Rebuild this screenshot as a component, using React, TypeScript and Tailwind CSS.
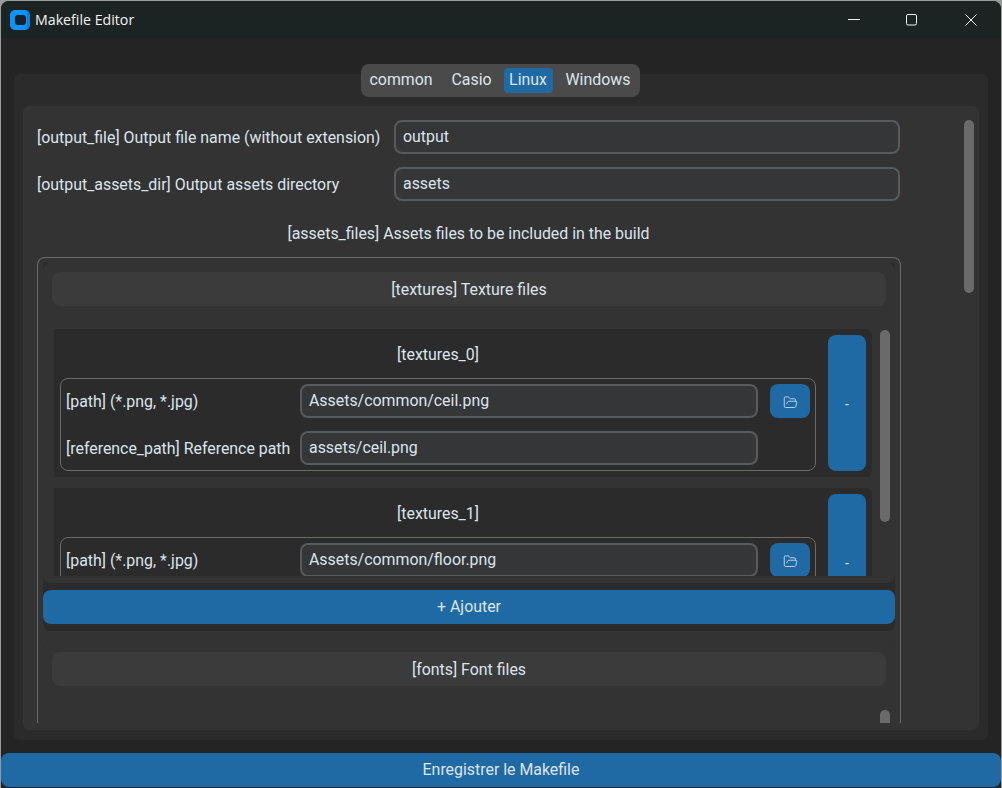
import { FolderOpen } from "lucide-react";

const inputCls =
  "h-[34px] rounded-[8px] border-2 border-[#565b5e] bg-[#343638] px-[7px] leading-[30px] text-[#dce4ee]";

const Field = ({ label, value, width }: { label: string; value: string; width: string }) => (
  <div className="flex items-center">
    <div className="w-[357px] shrink-0 whitespace-nowrap pt-[2px]">{label}</div>
    <div className={`${inputCls} ${width}`}>{value}</div>
  </div>
);

const TextureItem = ({ index, path, refPath }: { index: number; path: string; refPath?: string }) => (
  <div className="flex h-[148px] shrink-0 rounded-r-[6px] bg-[#2b2b2b] pl-[6px] pr-[6px] pt-[6px]">
    <div className="w-[756px] shrink-0">
      <div className="flex h-[37px] items-center justify-center pt-[2px]">[textures_{index}]</div>
      <div className="mt-[6px] h-[93px] rounded-[8px] border border-[#6a6a6a] pl-[5px] pt-[5px]">
        <div className="flex items-center">
          <div className="w-[234px] shrink-0 whitespace-nowrap pt-[2px]">[path] (*.png, *.jpg)</div>
          <div className={`${inputCls} w-[458px] shrink-0`}>{path}</div>
          <button className="ml-[12px] flex h-[34px] w-[40px] shrink-0 items-center justify-center rounded-[8px] bg-[#1f6aa5]">
            <FolderOpen size={15} strokeWidth={1.3} className="mt-[2px] text-[#dce4ee]" />
          </button>
        </div>
        {refPath && (
          <div className="mt-[13px] flex items-center">
            <div className="w-[234px] shrink-0 whitespace-nowrap pt-[2px]">[reference_path] Reference path</div>
            <div className={`${inputCls} w-[458px] shrink-0`}>{refPath}</div>
          </div>
        )}
      </div>
    </div>
    <button className="ml-[12px] flex h-[136px] w-[38px] shrink-0 items-center justify-center rounded-[8px] bg-[#1f6aa5] pt-[2px] text-[14px]">
      -
    </button>
  </div>
);

const tabCls = "flex h-[25px] items-center pb-[2px]";

export default function App() {
  return (
    <div
      className="h-[788px] w-[1002px] overflow-hidden bg-[#9a9a9a] pt-px text-[15.9px] text-[#dce4ee]"
      style={{ fontFamily: "Roboto, sans-serif" }}
    >
      <div className="mx-px flex h-full flex-col overflow-hidden rounded-t-[8px] bg-[#242424]">
        {/* title bar */}
        <div className="flex h-[37px] shrink-0 items-center bg-[#1c2423] pl-[9px] pt-px">
          <div className="flex h-[20px] w-[20px] items-center rounded-[5px] border-r-[3px] border-[#0a7fe0] bg-[#0a93fb] pl-[5px]">
            <div className="h-[10px] w-[11px] rounded-[3px] bg-[#16212b]" />
          </div>
          <span
            className="ml-[5px] text-[14.2px] text-[#f2f2f2]"
            style={{ fontFamily: "'Open Sans', sans-serif" }}
          >
            Makefile Editor
          </span>
          <div className="ml-auto flex items-center text-[#f0f0f0]">
            <svg width="12" height="12" viewBox="0 0 12 12" className="mr-[46px]" fill="none" stroke="currentColor">
              <path d="M0 5.5h12" />
            </svg>
            <svg width="12" height="12" viewBox="0 0 12 12" className="mr-[47px]" fill="none" stroke="currentColor">
              <rect x="0.5" y="0.5" width="10" height="10.5" rx="1.5" />
            </svg>
            <svg width="12" height="12" viewBox="0 0 12 12" className="mr-[24px]" fill="none" stroke="currentColor">
              <path d="M0.5 0.5l11 11M11.5 0.5l-11 11" />
            </svg>
          </div>
        </div>

        <div className="flex flex-1 flex-col">
          {/* tabs */}
          <div className="relative z-10 mt-[26px] -mb-[23px] flex justify-center pr-[2px]">
            <div className="flex h-[33px] w-[279px] items-center rounded-[8px] bg-[#4a4a4a] px-[3px]">
              <span className={`${tabCls} ml-[6px] w-[70px]`}>common</span>
              <span className={`${tabCls} ml-[9px] w-[46px] justify-center`}>Casio</span>
              <span className={`${tabCls} ml-[9px] w-[49px] justify-center rounded-[4px] bg-[#1f6aa5]`}>
                Linux
              </span>
              <span className={`${tabCls} ml-[13px]`}>Windows</span>
            </div>
          </div>

          {/* outer frame */}
          <div className="mx-[13px] flex h-[666px] flex-col rounded-[6px] bg-[#2b2b2b] px-[9px] pb-[10px] pt-[32px]">
            <div className="relative flex h-[624px] flex-col rounded-[6px] bg-[#333333] pb-[7px] pl-[14px] pt-[14px]">
              <div className="absolute right-[5px] top-[14px] h-[173px] w-[10px] rounded-[5px] bg-[#6a6a6a]" />
              <div className="flex flex-col gap-[13px]">
                <Field label="[output_file] Output file name (without extension)" value="output" width="w-[506px]" />
                <Field label="[output_assets_dir] Output assets directory" value="assets" width="w-[506px]" />
              </div>
              <div className="mt-[21px] w-[863px] text-center leading-[24px]">
                [assets_files] Assets files to be included in the build
              </div>

              {/* assets group */}
              <div className="relative mt-[11px] w-[864px] flex-1 overflow-hidden rounded-t-[8px] border border-b-0 border-[#6a6a6a] px-[5px] pt-[5px]">
                <div className="rounded-b-[8px] bg-[#2b2b2b]">
                  <div className="relative rounded-[8px] bg-[#333333] pb-[7px] pl-[9px] pr-[9px] pt-[9px]">
                    <div className="flex h-[34px] items-center justify-center rounded-[8px] bg-[#3b3b3b] pt-[2px]">
                      [textures] Texture files
                    </div>
                    <div className="mt-[23px] h-[247px] overflow-hidden">
                      <div className="ml-[2px] flex w-[818px] flex-col gap-[11px]">
                        <TextureItem index={0} path="Assets/common/ceil.png" refPath="assets/ceil.png" />
                        <TextureItem index={1} path="Assets/common/floor.png" />
                      </div>
                    </div>
                    <div className="absolute right-[5px] top-[67px] h-[192px] w-[10px] rounded-[5px] bg-[#6a6a6a]" />
                  </div>
                  <div className="py-[7px]">
                    <button className="flex h-[34px] w-full items-center justify-center rounded-[8px] bg-[#1f6aa5]">
                      + Ajouter
                    </button>
                  </div>
                </div>

                <div className="mt-[12px] rounded-t-[8px] bg-[#2b2b2b]">
                  <div className="relative h-[100px] rounded-[8px] bg-[#333333] px-[9px] pt-[9px]">
                    <div className="flex h-[34px] items-center justify-center rounded-[8px] bg-[#3b3b3b] pt-[2px]">
                      [fonts] Font files
                    </div>
                    <div className="absolute right-[5px] top-[67px] h-[40px] w-[10px] rounded-[5px] bg-[#6a6a6a]" />
                  </div>
                </div>
              </div>
            </div>
          </div>

          <button className="mt-[13px] h-[34px] w-full shrink-0 rounded-[8px] bg-[#1f6aa5]">
            Enregistrer le Makefile
          </button>
        </div>
      </div>
    </div>
  );
}
